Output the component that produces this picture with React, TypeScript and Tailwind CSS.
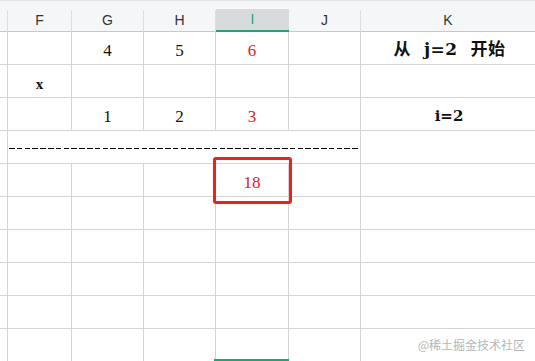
const COLS = [
  { key: 'stub', label: '', w: 'w-[8px]' },
  { key: 'F', label: 'F', w: 'w-[64px]' },
  { key: 'G', label: 'G', w: 'w-[72px]' },
  { key: 'H', label: 'H', w: 'w-[72px]' },
  { key: 'I', label: 'I', w: 'w-[73px]' },
  { key: 'J', label: 'J', w: 'w-[72px]' },
  { key: 'K', label: 'K', w: 'flex-1' },
];

type Cell = { text?: string; red?: boolean; bold?: boolean; cls?: string };
type Row = Partial<Record<string, Cell>> | 'dash';

const ROWS: Row[] = [
  { G: { text: '4' }, H: { text: '5' }, I: { text: '6', red: true }, K: { text: '从  j=2  开始', bold: true, cls: 'text-[17px] pt-[4px] pl-[3px] tracking-[0.5px] font-[DejaVu_Serif,Noto_Sans_CJK_SC,serif]' } },
  { F: { text: 'x', bold: true, cls: 'text-[15px] pt-[6px]' } },
  { G: { text: '1' }, H: { text: '2' }, I: { text: '3', red: true }, K: { text: 'i=2', bold: true, cls: 'text-[15px] pt-[4px] pl-[2px] font-[DejaVu_Serif,serif]' } },
  'dash',
  { I: { text: '18', red: true } },
  {},
  {},
  {},
  {},
  {},
];

function HeaderRow() {
  return (
    <div
      className="flex h-[32px] border-t border-[#e3e4e6] bg-[#f5f6f7]"
      style={{ fontFamily: '"Liberation Sans", "Noto Sans CJK SC", sans-serif' }}
    >
      {COLS.map((c) => {
        const active = c.key === 'I';
        return (
          <div key={c.key} className={`${c.w} flex flex-col`}>
            <div className="h-[9px]" />
            <div
              className={`flex flex-1 items-center justify-center text-[14px] ${
                active
                  ? 'bg-[#d8dadd] text-[#1fa574] border-b-2 border-[#1fa574]'
                  : 'text-[#333] border-b border-[#c6c8cb]'
              } ${c.key !== 'K' && !active ? 'border-r border-r-[#dcdee0]' : ''}`}
            >
              {c.label}
            </div>
          </div>
        );
      })}
    </div>
  );
}

function DataRow({ row }: { row: Row }) {
  if (row === 'dash') {
    return (
      <div className="flex h-[33px] border-b border-[#d2d4d7]">
        <div className="w-[8px] border-r border-[#d2d4d7]" />
        <div className="flex w-[353px] flex-col border-r border-[#d2d4d7] pl-[1px] pt-[16px]">
          <svg width="350" height="3" className="block" shapeRendering="crispEdges">
            <line x1="0" y1="1.5" x2="350" y2="1.5" stroke="#000" strokeWidth="1" strokeDasharray="5.5 2.3" />
          </svg>
        </div>
        <div className="flex-1" />
      </div>
    );
  }
  return (
    <div className="flex h-[33px] border-b border-[#d2d4d7]">
      {COLS.map((c) => {
        const cell = row[c.key];
        return (
          <div
            key={c.key}
            className={`${c.w} flex items-center justify-center ${c.key !== 'K' ? 'border-r border-[#d2d4d7]' : ''} ${
              cell?.cls ?? 'text-[17px] pt-[5px]'
            } ${cell?.red ? 'text-[#e2201c]' : 'text-[#111]'} ${cell?.bold ? 'font-bold' : ''} whitespace-pre`}
          >
            {cell?.text}
          </div>
        );
      })}
    </div>
  );
}

export default function App() {
  return (
    <div
      className="relative h-[361px] w-[535px] overflow-hidden bg-white"
      style={{ fontFamily: '"Liberation Serif", "DejaVu Serif", "Noto Sans CJK SC", serif' }}
    >
      <HeaderRow />
      {ROWS.map((r, i) => (
        <DataRow key={i} row={r} />
      ))}

      {/* green selection edge under column I */}
      <div className="absolute left-[214px] top-[359px] h-[2px] w-[75px] bg-[#1fa574]" />

      {/* red annotation box */}
      <div className="absolute left-[213px] top-[157px] h-[47px] w-[79px] rounded-[3px] border-[3px] border-[#e8231b]" />

      <div
        className="absolute right-[10px] top-[336px] text-[12px] text-[#b4b6b9]"
        style={{ fontFamily: '"Noto Sans CJK SC", sans-serif' }}
      >
        @稀土掘金技术社区
      </div>
    </div>
  );
}
